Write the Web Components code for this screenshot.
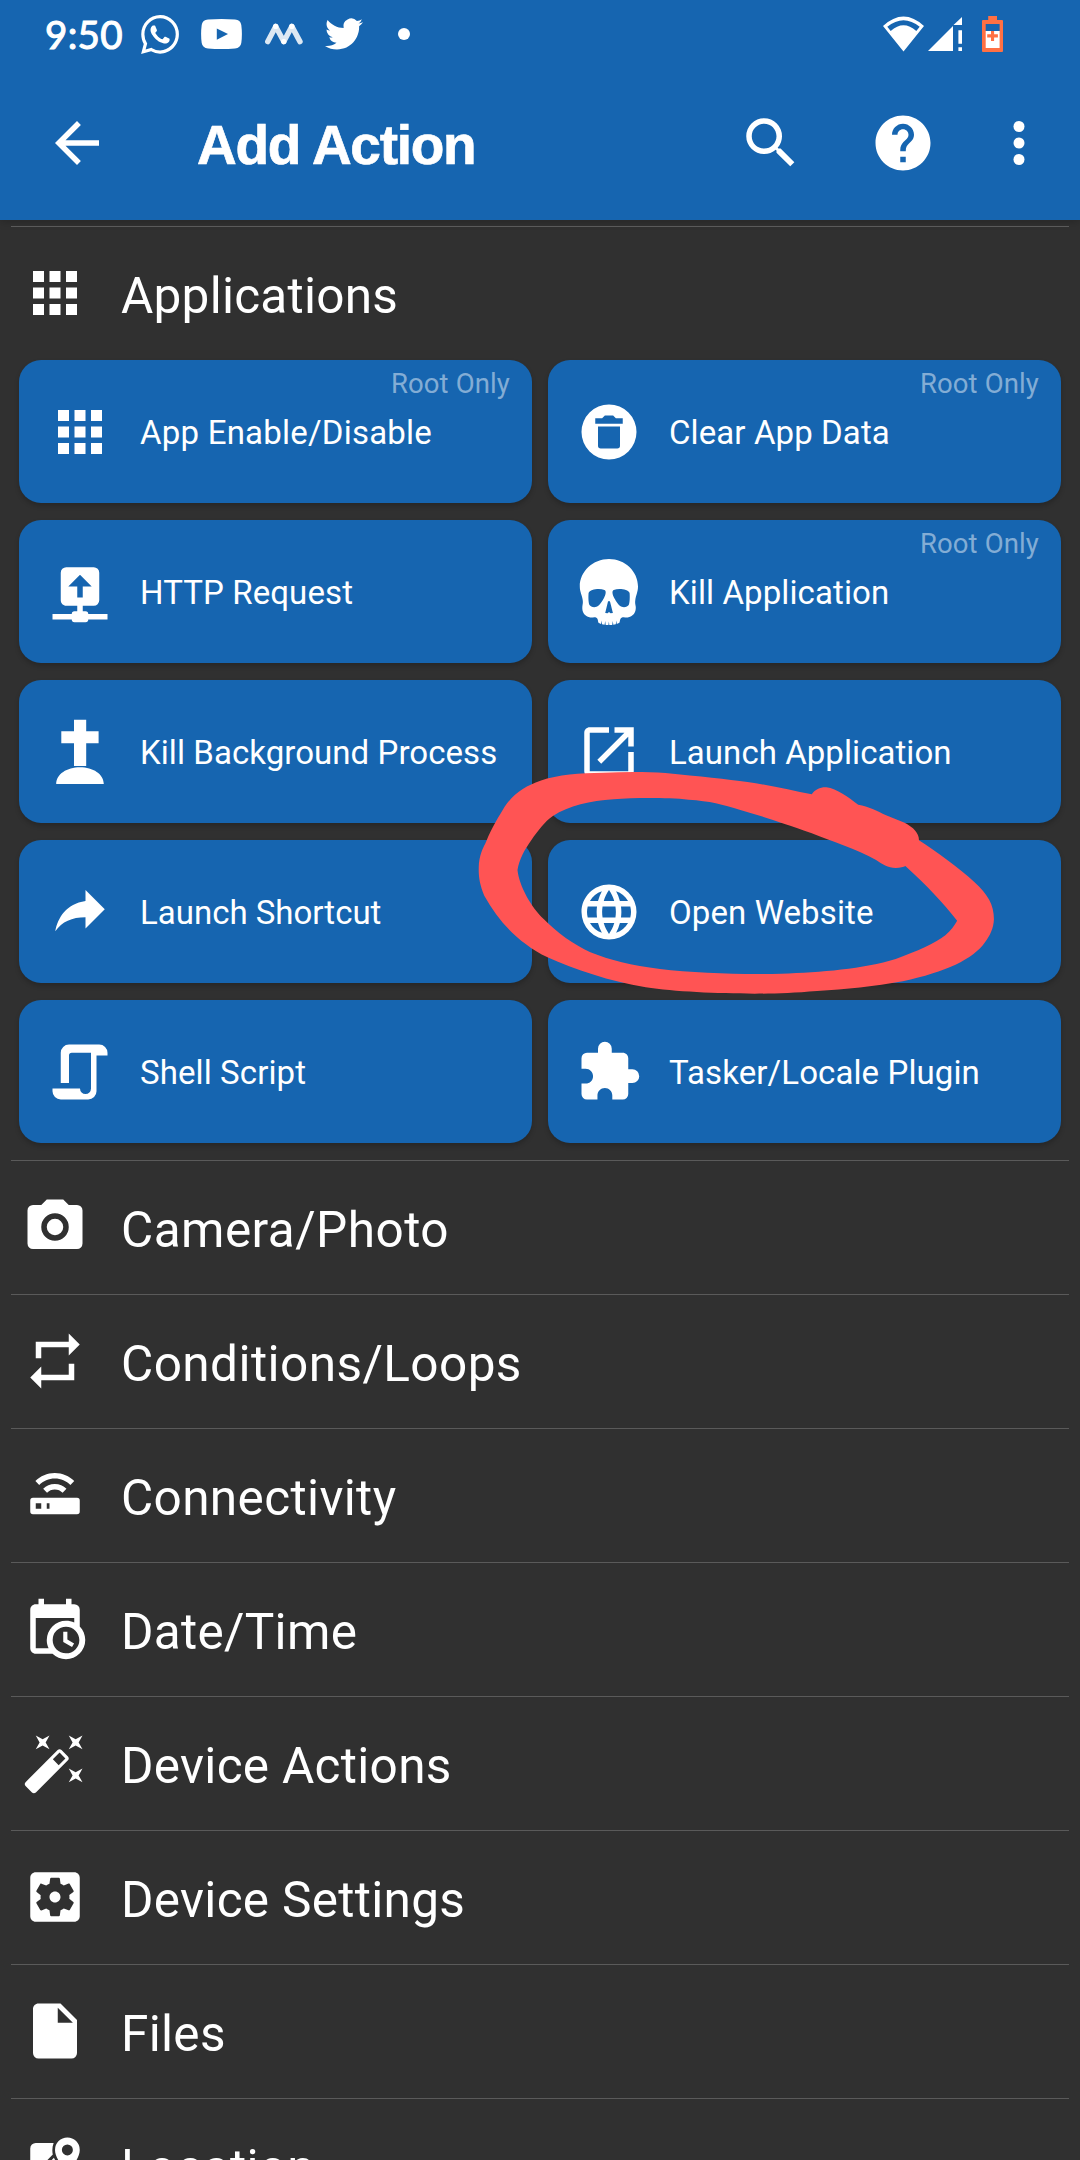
<!DOCTYPE html>
<html lang="en">
<head>
<meta charset="utf-8">
<title>Add Action</title>
<style>
html,body{margin:0;padding:0;background:#303030}
body{width:1080px;height:2160px;overflow:hidden;position:relative;font-family:Roboto,sans-serif;color:#fff}
</style>
</head>
<body>
<add-action-screen></add-action-screen>
<script>
const ICONS = {
  back: '<path d="M20 11H7.83l5.59-5.59L12 4l-8 8 8 8 1.41-1.41L7.83 13H20v-2z"/>',
  search: '<path d="M15.5 14h-.79l-.28-.27A6.471 6.471 0 0016 9.5 6.5 6.5 0 109.5 16c1.61 0 3.09-.59 4.23-1.57l.27.28v.79l5 4.99L20.49 19l-4.99-5zm-6 0C7.01 14 5 11.99 5 9.5S7.01 5 9.5 5 14 7.01 14 9.5 11.99 14 9.5 14z"/>',
  help: '<path d="M12 2C6.48 2 2 6.48 2 12s4.48 10 10 10 10-4.48 10-10S17.52 2 12 2zm1 17h-2v-2h2v2zm2.07-7.75l-.9.92C13.45 12.9 13 13.5 13 15h-2v-.5c0-1.1.45-2.1 1.17-2.83l1.24-1.26c.37-.36.59-.86.59-1.41 0-1.1-.9-2-2-2s-2 .9-2 2H8c0-2.21 1.79-4 4-4s4 1.79 4 4c0 .88-.36 1.68-.93 2.25z"/>',
  more: '<circle cx="12" cy="6" r="2"/><circle cx="12" cy="12" r="2"/><circle cx="12" cy="18" r="2"/>',
  apps: '<path d="M4 4h4v4H4zM10 4h4v4h-4zM16 4h4v4h-4zM4 10h4v4H4zM10 10h4v4h-4zM16 10h4v4h-4zM4 16h4v4H4zM10 16h4v4h-4zM16 16h4v4h-4z"/>',
  clear: '<path d="M12,2A10,10 0 0,1 22,12A10,10 0 0,1 12,22A10,10 0 0,1 2,12A10,10 0 0,1 12,2M17,7H14.5L13.5,6H10.5L9.5,7H7V9H17V7M9,18H15A1,1 0 0,0 16,17V10H8V17A1,1 0 0,0 9,18Z"/>',
  upload: '<path d="M17,3A2,2 0 0,1 19,5V15A2,2 0 0,1 17,17H13V19H14A1,1 0 0,1 15,20H22V22H15A1,1 0 0,1 14,23H10A1,1 0 0,1 9,22H2V20H9A1,1 0 0,1 10,19H11V17H7C5.89,17 5,16.1 5,15V5A2,2 0 0,1 7,3H17M12,5.75L7.75,10H11V14H13V10H16.25L12,5.75Z"/>',
  skull: '<g transform="scale(.363636)"><path fill-rule="evenodd" d="M33 0C49 0 62 12.500 62 27.500C62 33 60 36 59.300 41C58.800 44 59.500 45.500 59.800 48C60 54 57 57 52.500 58.300C50 59 48 57.500 46 58.500C43.600 59.500 44.300 62 43.400 63.800L40.800 65L40.300 61.500L39.800 65.300L37.300 65.700L36.800 62L36.200 65.900L33.300 66L32.900 62.500L32.400 66L29.700 65.900L29.200 62L28.600 65.700L26 65.300L25.600 61.500L25 65L22.500 63.800C21.700 62 22.300 59.500 20 58.500C18 57.500 16 59 13.500 58.300C9 57 6 54 6.300 48C6.500 45.500 7.200 44 6.700 41C6 36 3.800 33 3.800 27.500C3.800 12.500 17 0 33 0ZM12.600 34C14 30.500 23 29 28.500 31C30.700 32 29.500 36 28 39C26 42.500 23.500 46.800 20.500 47.800C17.500 48.700 14.500 47.700 13.500 46C12.300 43.500 12.300 37.500 12.600 34ZM53.600 34C52.200 30.500 43.200 29 37.700 31C35.500 32 36.700 36 38.200 39C40.200 42.500 42.700 46.800 45.700 47.800C48.700 48.700 51.700 47.700 52.700 46C53.900 43.500 53.900 37.500 53.600 34ZM32 42.500Q33 41.500 34 42.500L36.900 54L34.500 54.300L33 53L31.600 54.300L29.200 54Z"/></g>',
  grave: '<g transform="scale(.363636)"><path d="M27 .700H39.200V12.300H51.600V24.300H39.200V47H27V24.300H14.300V12.300H27ZM9.200 65C9.200 55 20 48.200 33 48.200S56.800 55 56.800 65Z"/></g>',
  open: '<path d="M19 19H5V5h7V3H5c-1.110 0-2 .9-2 2v14c0 1.100.89 2 2 2h14c1.100 0 2-.9 2-2v-7h-2v7zM14 3v2h3.590l-9.830 9.830 1.410 1.410L19 6.410V10h2V3h-7z"/>',
  share: '<path d="M21,11L14,4V8C7,9 4,14 3,19C5.5,15.5 9,13.9 14,13.9V18L21,11Z"/>',
  web: '<path d="M16.36,14C16.44,13.34 16.5,12.68 16.5,12C16.5,11.32 16.44,10.66 16.36,10H19.74C19.9,10.64 20,11.31 20,12C20,12.69 19.9,13.36 19.74,14M14.59,19.56C15.19,18.45 15.65,17.25 15.97,16H18.92C17.96,17.65 16.43,18.93 14.59,19.56M14.34,14H9.66C9.56,13.34 9.5,12.68 9.5,12C9.5,11.32 9.56,10.65 9.66,10H14.34C14.43,10.65 14.5,11.32 14.5,12C14.5,12.68 14.43,13.34 14.34,14M12,19.96C11.17,18.76 10.5,17.43 10.09,16H13.91C13.5,17.43 12.83,18.76 12,19.96M8,8H5.08C6.03,6.34 7.57,5.06 9.4,4.44C8.8,5.55 8.35,6.75 8,8M5.08,16H8C8.35,17.25 8.8,18.45 9.4,19.56C7.57,18.93 6.03,17.65 5.08,16M4.26,14C4.1,13.36 4,12.69 4,12C4,11.31 4.1,10.64 4.26,10H7.64C7.56,10.66 7.5,11.32 7.5,12C7.5,12.68 7.56,13.34 7.64,14M12,4.03C12.83,5.23 13.5,6.57 13.91,8H10.09C10.5,6.57 11.17,5.23 12,4.03M18.92,8H15.97C15.65,6.75 15.19,5.55 14.59,4.44C16.43,5.07 17.96,6.34 18.92,8M12,2C6.47,2 2,6.5 2,12A10,10 0 0,0 12,22A10,10 0 0,0 22,12A10,10 0 0,0 12,2Z"/>',
  script: '<path d="M14,20A2,2 0 0,0 16,18V5H9A1,1 0 0,0 8,6V16H5V5A3,3 0 0,1 8,2H19A3,3 0 0,1 22,5V6H18V18L18,19A3,3 0 0,1 15,22H5A3,3 0 0,1 2,19V18H12A2,2 0 0,0 14,20Z"/>',
  puzzle: '<path d="M20.5,11H19V7C19,5.89 18.1,5 17,5H13V3.5A2.5,2.5 0 0,0 10.5,1A2.5,2.5 0 0,0 8,3.5V5H4A2,2 0 0,0 2,7V10.8H3.5C5,10.8 6.2,12 6.2,13.5C6.2,15 5,16.2 3.5,16.2H2V20A2,2 0 0,0 4,22H7.8V20.5C7.8,19 9,17.8 10.5,17.8C12,17.8 13.2,19 13.2,20.5V22H17A2,2 0 0,0 19,20V16H20.5A2.5,2.5 0 0,0 23,13.5A2.5,2.5 0 0,0 20.5,11Z"/>',
  camera: '<path d="M4,4H7L9,2H15L17,4H20A2,2 0 0,1 22,6V18A2,2 0 0,1 20,20H4A2,2 0 0,1 2,18V6A2,2 0 0,1 4,4M12,7A5,5 0 0,0 7,12A5,5 0 0,0 12,17A5,5 0 0,0 17,12A5,5 0 0,0 12,7M12,9A3,3 0 0,1 15,12A3,3 0 0,1 12,15A3,3 0 0,1 9,12A3,3 0 0,1 12,9Z"/>',
  repeat: '<path d="M17,17H7V14L3,18L7,22V19H19V13H17M7,7H17V10L21,6L17,2V5H5V11H7V7Z"/>',
  router: '<path d="M4,13H20A1,1 0 0,1 21,14V18A1,1 0 0,1 20,19H4A1,1 0 0,1 3,18V14A1,1 0 0,1 4,13M9,17H10V15H9V17M5,15V17H7V15H5M19,6.93L17.6,8.34C16.15,6.89 14.15,6 11.93,6C9.72,6 7.72,6.89 6.27,8.34L4.87,6.93C6.68,5.12 9.18,4 11.93,4C14.69,4 17.19,5.12 19,6.93M16.17,9.76L14.77,11.17C14.04,10.45 13.04,10 11.93,10C10.82,10 9.82,10.45 9.1,11.17L7.7,9.76C8.78,8.67 10.28,8 11.93,8C13.58,8 15.08,8.67 16.17,9.76Z"/>',
  calendar: '<path d="M15,13H16.5V15.82L18.94,17.23L18.19,18.53L15,16.69V13M19,8H5V19H9.67C9.24,18.09 9,17.07 9,16A7,7 0 0,1 16,9C17.07,9 18.09,9.24 19,9.67V8M5,21C3.89,21 3,20.1 3,19V5C3,3.89 3.89,3 5,3H6V1H8V3H16V1H18V3H19A2,2 0 0,1 21,5V11.1C22.24,12.36 23,14.09 23,16A7,7 0 0,1 16,23C14.09,23 12.36,22.24 11.1,21H5M16,11.15A4.85,4.85 0 0,0 11.15,16C11.15,18.68 13.32,20.85 16,20.85A4.85,4.85 0 0,0 20.85,16C20.85,13.32 18.68,11.15 16,11.15Z"/>',
  wand: '<path d="M7.5,5.6L5,7L6.4,4.5L5,2L7.5,3.4L10,2L8.6,4.5L10,7L7.5,5.6M19.5,15.4L22,14L20.6,16.5L22,19L19.5,17.6L17,19L18.4,16.5L17,14L19.5,15.4M22,2L20.6,4.5L22,7L19.5,5.6L17,7L18.4,4.5L17,2L19.5,3.4L22,2M13.34,12.78L15.78,10.34L13.66,8.22L11.22,10.66L13.34,12.78M14.37,7.29L16.71,9.63C17.1,10 17.1,10.65 16.71,11.04L5.04,22.71C4.65,23.1 4,23.1 3.63,22.71L1.29,20.37C0.9,20 0.9,19.35 1.29,18.96L12.96,7.29C13.35,6.9 14,6.9 14.37,7.29Z"/>',
  settings: '<path d="M12 10c-1.1 0-2 .9-2 2s.9 2 2 2 2-.9 2-2-.9-2-2-2zm7-7H5c-1.11 0-2 .9-2 2v14c0 1.1.89 2 2 2h14c1.11 0 2-.9 2-2V5c0-1.1-.89-2-2-2zm-1.750 9c0 .23-.02.46-.05.68l1.480 1.160c.13.11.17.3.08.45l-1.400 2.420c-.09.15-.27.21-.43.15l-1.740-.7c-.36.28-.76.51-1.180.69l-.26 1.850c-.03.17-.18.3-.35.3h-2.800c-.17 0-.32-.13-.35-.29l-.26-1.850c-.43-.18-.82-.41-1.180-.69l-1.740.7c-.16.06-.34 0-.43-.15l-1.400-2.420c-.09-.15-.05-.34.08-.45l1.480-1.160c-.03-.23-.05-.46-.05-.69 0-.23.02-.46.05-.68l-1.480-1.160c-.13-.11-.17-.3-.08-.45l1.400-2.420c.09-.15.27-.21.43-.15l1.740.7c.36-.28.76-.51 1.180-.69l.26-1.850c.03-.17.18-.3.35-.3h2.800c.17 0 .32.13.35.29l.26 1.850c.43.18.82.41 1.180.69l1.740-.7c.16-.06.34 0 .43.15l1.400 2.420c.09.15.05.34-.08.45l-1.480 1.160c.03.23.05.46.05.69z"/>',
  file: '<path d="M13,9V3.5L18.5,9M6,2C4.89,2 4,2.89 4,4V20A2,2 0 0,0 6,22H18A2,2 0 0,0 20,20V8L14,2H6Z"/>',
  pin: '<path d="M16.500 2A4.500 4.500 0 0 0 12 6.500C12 9.900 16.500 14.900 16.500 14.900S21 9.900 21 6.500A4.500 4.500 0 0 0 16.500 2M16.500 4.500A2 2 0 1 1 16.500 8.500A2 2 0 1 1 16.500 4.500M5 4H11.500C11 5.300 10.900 6.900 11.200 8.200L3 16.500V6A2 2 0 0 1 5 4M11.600 9.400L13 12L5 20L3 18Z"/>'
};
const STATUS = {
  whatsapp: [38, 39, '0 0 24 24', '<path d="M17.472 14.382c-.297-.149-1.758-.867-2.03-.967-.273-.099-.471-.148-.67.15-.197.297-.767.966-.94 1.164-.173.199-.347.223-.644.075-.297-.15-1.255-.463-2.39-1.475-.883-.788-1.48-1.761-1.653-2.059-.173-.297-.018-.458.13-.606.134-.133.298-.347.446-.52.149-.174.198-.298.298-.497.099-.198.05-.371-.025-.52-.075-.149-.669-1.612-.916-2.207-.242-.579-.487-.5-.669-.51-.173-.008-.371-.01-.57-.01-.198 0-.52.074-.792.372-.272.297-1.04 1.016-1.04 2.479 0 1.462 1.065 2.875 1.213 3.074.149.198 2.096 3.2 5.077 4.487.709.306 1.262.489 1.694.625.712.227 1.36.195 1.871.118.571-.085 1.758-.719 2.006-1.413.248-.694.248-1.289.173-1.413-.074-.124-.272-.198-.57-.347m-5.421 7.403h-.004a9.87 9.87 0 01-5.031-1.378l-.361-.214-3.741.982.998-3.648-.235-.374a9.86 9.86 0 01-1.51-5.26c.001-5.45 4.436-9.884 9.888-9.884 2.64 0 5.122 1.03 6.988 2.898a9.825 9.825 0 012.893 6.994c-.003 5.45-4.437 9.884-9.885 9.884m8.413-18.297A11.815 11.815 0 0012.05 0C5.495 0 .16 5.335.157 11.892c0 2.096.547 4.142 1.588 5.945L.057 24l6.305-1.654a11.882 11.882 0 005.683 1.448h.005c6.554 0 11.89-5.335 11.893-11.893a11.821 11.821 0 00-3.48-8.413Z"/>'],
  youtube: [41, 30, '0 0 41 30', '<path fill-rule="evenodd" d="M7 .6Q20.500-.6 34 .6Q39.500 1 40.300 6Q41.500 15 40.300 24Q39.500 29 34 29.400Q20.500 30.600 7 29.400Q1.500 29 .7 24Q-.5 15 .7 6Q1.500 1 7 .6ZM15.800 9.500V20.700L27 15.100Z"/>'],
  zigzag: [38, 22, '0 0 38 22', '<g fill="none" stroke="#dce8f3" stroke-width="5.400" stroke-linecap="round" stroke-linejoin="round"><path d="M2.800 18.600L10.700 3.400L18.800 18.600L26.800 3.400L35 18.600"/></g><g><circle cx="10.700" cy="3.400" r="2.700"/><circle cx="18.800" cy="18.600" r="2.700"/><circle cx="26.800" cy="3.400" r="2.700"/></g>'],
  twitter: [38, 38, '0 0 24 24', '<path d="M23.953 4.57a10 10 0 01-2.825.775 4.958 4.958 0 002.163-2.723c-.951.555-2.005.959-3.127 1.184a4.92 4.92 0 00-8.384 4.482C7.69 8.095 4.067 6.13 1.64 3.162a4.822 4.822 0 00-.666 2.475c0 1.71.87 3.213 2.188 4.096a4.904 4.904 0 01-2.228-.616v.06a4.923 4.923 0 003.946 4.827 4.996 4.996 0 01-2.212.085 4.936 4.936 0 004.604 3.417 9.867 9.867 0 01-6.102 2.105c-.39 0-.779-.023-1.17-.067a13.995 13.995 0 007.557 2.209c9.053 0 13.998-7.496 13.998-13.985 0-.21 0-.42-.015-.63A9.935 9.935 0 0024 4.59z"/>'],
  dot: [12, 12, '0 0 12 12', '<circle cx="6" cy="6" r="6"/>'],
  wifi: [41, 36, '0 0 41 36', '<path fill-rule="evenodd" d="M0 10Q20.500-9 41 10L20.500 35.500ZM4.300 10.800L7.700 15Q20.500 3.500 33.300 15L36.700 10.800Q20.500-2.300 4.300 10.800Z"/>'],
  signal: [34, 34, '0 0 34 34', '<path d="M34 0V8H25.500ZM25 9V34H0ZM30.400 13.200H34V26.700H30.400ZM30.400 30.300H34V34H30.400Z"/>'],
  battery: [21, 36, '0 0 21 36', '<path fill="#ff7043" d="M6.200 0H15V4H20A1 1 0 0 1 21 5V35A1 1 0 0 1 20 36H1A1 1 0 0 1 0 35V5A1 1 0 0 1 1 4H6.200Z"/><path fill="#1665b0" d="M3.700 8H17.600V15H3.700Z"/><path d="M3.700 15H17.600V32H3.700Z"/><path fill="#ff7043" d="M9 15H12.100V18.200H15.900V21.400H12.100V25H9V21.400H5.200V18.200H9Z"/>']
};

class BaseElement extends HTMLElement {
  connectedCallback() {
    if (!this.shadowRoot) this.attachShadow({mode: 'open'}).innerHTML = this.render();
  }
}

customElements.define('ui-icon', class extends BaseElement {
  render() {
    return `<style>:host{display:block;flex:none;width:66px;height:66px}svg{display:block;fill:#fff}</style>
      <svg width="66" height="66" viewBox="0 0 24 24">${ICONS[this.getAttribute('name')]}</svg>`;
  }
});

customElements.define('status-icon', class extends BaseElement {
  render() {
    const [w, h, box, art] = STATUS[this.getAttribute('name')];
    return `<style>:host{display:block;flex:none}svg{display:block;fill:#fff}</style>
      <svg width="${w}" height="${h}" viewBox="${box}" preserveAspectRatio="none">${art}</svg>`;
  }
});

customElements.define('status-bar', class extends BaseElement {
  render() {
    return `<style>
      :host{display:flex;align-items:center;height:68px;box-sizing:border-box;padding:0 77px 0 45px}
      .time{width:96px;font:400 38.5px/44px Lato,sans-serif;letter-spacing:.3px;-webkit-text-stroke:1.1px #fff}
      .left,.right{display:flex;align-items:center}
      .left{gap:22.3px}
      .left :last-child{margin-left:13px}
      .right{margin-left:auto;gap:4px}
      .right :last-child{margin-left:16px}
    </style>
    <div class="time">9:50</div>
    <div class="left"><status-icon name="whatsapp"></status-icon><status-icon name="youtube"></status-icon><status-icon name="zigzag"></status-icon><status-icon name="twitter"></status-icon><status-icon name="dot"></status-icon></div>
    <div class="right"><status-icon name="wifi"></status-icon><status-icon name="signal"></status-icon><status-icon name="battery"></status-icon></div>`;
  }
});

customElements.define('tool-bar', class extends BaseElement {
  render() {
    return `<style>
      :host{display:flex;align-items:center;height:152px;box-sizing:border-box;padding:0 28px 2px 44px}
      h1{flex:1;margin:4px 0 0 87px;font:700 55px/66px "Liberation Sans",sans-serif;letter-spacing:-1.3px;-webkit-text-stroke:.7px #fff}
      .actions{display:flex}
      .actions :nth-child(2){margin-left:66px}
      .actions :nth-child(3){margin-left:50px}
    </style>
    <ui-icon name="back"></ui-icon>
    <h1><slot></slot></h1>
    <div class="actions"><ui-icon name="search"></ui-icon><ui-icon name="help"></ui-icon><ui-icon name="more"></ui-icon></div>`;
  }
});

customElements.define('action-card', class extends BaseElement {
  render() {
    return `<style>
      :host{display:flex;align-items:center;position:relative;height:143px;box-sizing:border-box;padding-left:28px;border-radius:22px;background:#1665b0;box-shadow:0 3px 5px rgba(0,0,0,.2)}
      .label{margin:2px 0 0 27px;font-size:33px;line-height:44px;white-space:nowrap;letter-spacing:${this.getAttribute('track') || '.1'}px}
      .note{position:absolute;top:8px;right:22px;font-size:27.5px;line-height:32px;letter-spacing:.13px;color:rgba(255,255,255,.48)}
    </style>
    <ui-icon name="${this.getAttribute('icon')}"></ui-icon>
    <span class="label"><slot></slot></span>
    ${this.hasAttribute('root') ? '<span class="note">Root Only</span>' : ''}`;
  }
});

customElements.define('action-section', class extends BaseElement {
  render() {
    return `<style>
      :host{display:block}
      .head{display:flex;height:134px;box-sizing:border-box;margin:0 11px;padding:33px 0 0 11px;border-top:1px solid #5a5a5a}
      .title{margin:3px 0 0 33px;font-size:49.5px;line-height:66px;white-space:nowrap;letter-spacing:${this.getAttribute('track') || '.3'}px}
      .cards{display:grid;grid-template-columns:513px 513px;gap:17px 16px;padding-left:19px}
      :host([open]) .cards{padding-bottom:17px}
    </style>
    <div class="head"><ui-icon name="${this.getAttribute('icon')}"></ui-icon><span class="title">${this.getAttribute('title-text')}</span></div>
    <div class="cards"><slot></slot></div>`;
  }
});

customElements.define('marker-ring', class extends BaseElement {
  render() {
    return `<style>:host{position:absolute;left:460px;top:670px;pointer-events:none}svg{display:block}</style>
    <svg width="560" height="340" viewBox="0 0 1568 1020" preserveAspectRatio="none"><path fill="#ff5454" fill-rule="evenodd" d="M985 373C995 357 1010 351 1026 352C1055 356 1088 383 1115 404C1144 409 1168 422 1193 436L1245 458C1270 472 1286 490 1285 511C1335 546 1400 596 1440 636C1478 674 1495 703 1495 748C1494 775 1484 797 1470 817C1437 868 1360 906 1240 934C1160 950 1080 958 1000 963C930 969 880 971 825 971C720 971 600 965 520 952C420 935 320 898 245 862C165 819 110 758 68 677C53 638 51 612 53 580C57 545 67 530 73 515C90 470 110 437 125 410C152 368 185 347 225 332C275 313 335 309 400 308C460 305 525 305 575 309C670 319 750 328 805 336C870 346 930 362 985 373ZM161 600C166 568 180 540 200 510C218 483 237 455 260 438C305 407 365 393 430 388C490 383 580 383 640 389C700 393 735 403 785 420C845 438 900 457 985 490C1040 513 1110 538 1165 570C1182 583 1198 593 1220 594C1233 593 1242 592 1247 588C1310 650 1350 695 1392 752C1384 768 1374 781 1359 796C1330 820 1280 844 1220 867C1130 897 1010 907 900 911C800 914 660 910 560 897C480 886 420 871 365 847C320 825 270 787 235 748C200 712 166 650 161 600Z"/></svg>`;
  }
});

customElements.define('add-action-screen', class extends BaseElement {
  render() {
    return `<style>
      :host{display:flex;flex-direction:column;width:1080px;height:2160px;overflow:hidden;background:#303030}
      header{flex:none;height:220px;margin-bottom:6px;background:#1665b0;box-shadow:0 2px 8px rgba(0,0,0,.2)}
      main{flex:1;min-height:0;overflow:hidden}
    </style>
    <header><status-bar></status-bar><tool-bar>Add Action</tool-bar></header>
    <main>
      <action-section open icon="apps" title-text="Applications" track=".25">
        <action-card icon="apps" root track=".22">App Enable/Disable</action-card>
        <action-card icon="clear" root>Clear App Data</action-card>
        <action-card icon="upload">HTTP Request</action-card>
        <action-card icon="skull" root>Kill Application</action-card>
        <action-card icon="grave" track=".06">Kill Background Process</action-card>
        <action-card icon="open" track=".06">Launch Application</action-card>
        <action-card icon="share" track="0">Launch Shortcut</action-card>
        <action-card icon="web">Open Website</action-card>
        <action-card icon="script">Shell Script</action-card>
        <action-card icon="puzzle">Tasker/Locale Plugin</action-card>
      </action-section>
      <action-section icon="camera" title-text="Camera/Photo" track=".45"></action-section>
      <action-section icon="repeat" title-text="Conditions/Loops" track=".43"></action-section>
      <action-section icon="router" title-text="Connectivity" track=".36"></action-section>
      <action-section icon="calendar" title-text="Date/Time"></action-section>
      <action-section icon="wand" title-text="Device Actions"></action-section>
      <action-section icon="settings" title-text="Device Settings"></action-section>
      <action-section icon="file" title-text="Files"></action-section>
      <action-section icon="pin" title-text="Location"></action-section>
    </main>
    <marker-ring></marker-ring>`;
  }
});
</script>
</body>
</html>
